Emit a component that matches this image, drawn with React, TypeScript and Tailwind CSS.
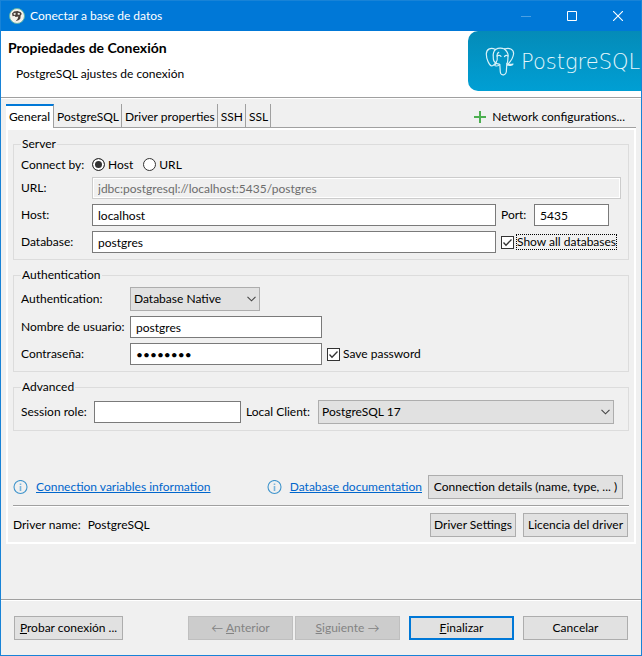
import { ReactNode } from 'react';

const FIELD = 'h-[22px] border border-[#7a7a7a] bg-white px-[5px] text-[12px] leading-[18px] text-black outline-none min-w-0';
const BUTTON = 'h-6 border border-[#adadad] bg-[#e1e1e1] text-center whitespace-nowrap';
const GREY_BUTTON = 'h-6 border border-[#bfbfbf] bg-[#cccccc] text-center whitespace-nowrap text-[#838383]';

const TABS = ['PostgreSQL', 'Driver properties', 'SSH', 'SSL'];

function AppIcon() {
  return (
    <svg className="size-4" viewBox="0 0 16 16" aria-hidden="true">
      <circle cx="8" cy="8" r="7.5" fill="#f4f1ea" stroke="#5fb3ac" />
      <path d="M3 5.4 L5 3.4 L8.6 3 L11.8 4.2 L12.8 6 L11.6 7.6 L11.4 10.4 L10 12 L6.6 13.2 L8.6 11 L9.4 8.6 L6.6 9 L5.6 7.8 L3.6 8.2 Z" fill="#4a3f3a" />
      <path d="M4.4 5.6 L6.4 4.8 L6.8 6.4 L5 7 Z M8.8 4.8 L11 5.2 L10.4 7 L8.6 6.6 Z" fill="#f4f1ea" />
    </svg>
  );
}

function Elephant() {
  return (
    <svg className="h-[31px] w-[30px] shrink-0" viewBox="0 0 30 31" fill="none" stroke="#d8f1f8" strokeWidth="1.2" strokeLinecap="round" strokeLinejoin="round" aria-hidden="true">
      {/* left ear */}
      <path d="M10.500 3.500 C6 1.200 1.500 2.500 1.300 8 C1.300 12.500 4 19.500 6.800 20 C8.300 20 9.500 18.300 10.800 16.800" />
      <path d="M10.500 3.500 C8.300 5.500 8 8.500 8.300 11 C8.100 13.800 8.800 15.800 10.800 16.800 C12.300 15 12.600 13 12.200 11 C11.800 8.500 12.500 7 13.800 6.300" />
      {/* head and right ear */}
      <path d="M10.500 3.500 C13 2 17 2 19.500 3 C24 1.200 28.800 3 28.600 7.800 C28.200 11.500 25.500 15.500 23.300 17.800" />
      <path d="M19.500 3 C22 5.500 23.800 8.500 23 11 C22.600 13.500 23.400 15 21.800 17.800" />
      {/* trunk */}
      <path d="M12 10 C13.500 8.800 15.500 9.300 16 10.500 M19.500 10.500 C20.500 9.300 22 9.200 23 10" />
      <path d="M10.800 16.800 C12 18.500 13.500 17.500 14.700 18.500 C15.300 21 14.800 25 15.700 27.500 C17 29.800 20.800 29.300 21.300 26 L21.800 18.300 C24 20 27.300 19.500 28 18 C26 18.500 23.500 18.300 21.800 17.800" />
      <path d="M10.800 17.500 C9.800 19.300 8.800 20 11.500 20 C13.300 20 14.200 19.500 14.700 18.500" />
    </svg>
  );
}

function InfoIcon() {
  return (
    <svg className="size-[15px] shrink-0" viewBox="0 0 15 15" fill="none" stroke="#3f94cc" aria-hidden="true">
      <circle cx="7.500" cy="7" r="6.500" strokeWidth="1.100" />
      <path d="M7.500 6 V11 M7.500 3.500 V5" strokeWidth="1.600" stroke="#7ab5dc" />
    </svg>
  );
}

function Group({ title, children }: { title: string; children: ReactNode }) {
  return (
    <fieldset className="min-w-0 border border-[#dcdcdc] px-[7px] pb-[6px]">
      <legend className="px-[1px] leading-4">{title}</legend>
      {children}
    </fieldset>
  );
}

function CheckBox({ id, label, focused }: { id: string; label: string; focused?: boolean }) {
  return (
    <span className="flex items-center gap-[2px]">
      <span className="grid shrink-0">
        <input id={id} type="checkbox" defaultChecked className="peer col-start-1 row-start-1 size-[13px] appearance-none border border-[#333] bg-white" />
        <svg className="pointer-events-none invisible col-start-1 row-start-1 size-[13px] peer-checked:visible" viewBox="0 0 13 13" fill="none" stroke="#333" strokeWidth="1.300" aria-hidden="true">
          <path d="M2.500 6.500 L5 9.200 L10.500 3.500" />
        </svg>
      </span>
      <label htmlFor={id} className={focused ? 'border border-dotted border-black leading-[14px] whitespace-nowrap' : 'border border-transparent leading-[14px] whitespace-nowrap'}>
        {label}
      </label>
    </span>
  );
}

function Radio({ label, checked }: { label: string; checked?: boolean }) {
  return (
    <label className="flex items-center gap-[3px]">
      <input
        type="radio"
        name="connect-by"
        defaultChecked={checked}
        className="size-[13px] appearance-none rounded-full border border-[#333] bg-white checked:bg-[#333] checked:shadow-[inset_0_0_0_2px_white]"
      />
      {label}
    </label>
  );
}

function DropDown({ id, value, className }: { id: string; value: string; className: string }) {
  return (
    <div className={`grid items-center ${className}`}>
      <select id={id} className="col-start-1 row-start-1 h-6 w-full appearance-none border border-[#adadad] bg-[#e1e1e1] pl-[3px] text-[12px] outline-none">
        <option>{value}</option>
      </select>
      <svg className="pointer-events-none col-start-1 row-start-1 mr-1 h-[6px] w-[9px] justify-self-end" viewBox="0 0 9 6" fill="none" stroke="#444" strokeWidth="1.100" aria-hidden="true">
        <path d="M.5 .8 L4.500 4.800 L8.500 .8" />
      </svg>
    </div>
  );
}

function TitleBar() {
  return (
    <div className="flex h-[30px] items-center bg-[#0078d7] pl-2 text-white">
      <AppIcon />
      <h1 className="ml-[5px] flex-1">Conectar a base de datos</h1>
      <button type="button" disabled aria-label="Minimizar" className="grid h-full w-[46px] place-items-center">
        <svg className="size-[10px]" viewBox="0 0 10 10" stroke="#4ba0e3" aria-hidden="true"><path d="M0 5.500 H10" /></svg>
      </button>
      <button type="button" aria-label="Maximizar" className="grid h-full w-[46px] place-items-center">
        <svg className="size-[10px]" viewBox="0 0 10 10" fill="none" stroke="#fff" aria-hidden="true"><path d="M.5 .5 H9.500 V9.500 H.5 Z" /></svg>
      </button>
      <button type="button" aria-label="Cerrar" className="grid h-full w-[46px] place-items-center">
        <svg className="size-[10px]" viewBox="0 0 10 10" stroke="#fff" strokeWidth="1.100" aria-hidden="true"><path d="M0 0 L10 10 M10 0 L0 10" /></svg>
      </button>
    </div>
  );
}

function Banner() {
  return (
    <header className="flex h-[66px] bg-white">
      <div className="flex-1 pt-2 pl-[7px]">
        <h2 className="text-[14px] leading-[18px] font-bold">Propiedades de Conexión</h2>
        <p className="mt-[9px] pl-2 leading-4">PostgreSQL ajustes de conexión</p>
      </div>
      <div className="flex h-[60px] w-[173px] items-center gap-[6px] overflow-hidden rounded-l-[10px] bg-linear-to-b from-[#048bb8] to-[#009fd4] pl-[17px] text-[#e6f7fc]">
        <Elephant />
        <span className="pt-[2px] font-['DejaVu_Sans',sans-serif] text-[21px] leading-6 font-extralight">PostgreSQL</span>
      </div>
    </header>
  );
}

function TabBar() {
  return (
    <div className="flex h-6 items-stretch" role="tablist">
      <button type="button" role="tab" aria-selected="true" className="w-[48px] border-t-2 border-r border-t-[#0078d7] border-r-[#a0a0a0] bg-white text-center">
        General
      </button>
      <div className="flex flex-1 items-stretch border-b border-[#a0a0a0]">
        {TABS.map(tab => (
          <button key={tab} type="button" role="tab" aria-selected="false" className="border-r border-[#a0a0a0] pt-[2px] pr-[2px] pl-[3px] whitespace-nowrap">
            {tab}
          </button>
        ))}
        <button type="button" className="mr-[11px] ml-auto flex items-center gap-[6px] pt-[2px]">
          <svg className="size-3" viewBox="0 0 12 12" stroke="#4caf50" strokeWidth="2" aria-hidden="true"><path d="M6 0 V12 M0 6 H12" /></svg>
          Network configurations...
        </button>
      </div>
    </div>
  );
}

function ServerGroup() {
  return (
    <Group title="Server">
      <div className="flex h-[25px] items-center" role="radiogroup" aria-labelledby="connect-by">
        <span id="connect-by" className="w-[71px]">Connect by:</span>
        <div className="flex gap-[10px]">
          <Radio label="Host" checked />
          <Radio label="URL" />
        </div>
      </div>
      <div className="grid grid-cols-[71px_1fr_38px_75px_12px] items-center gap-y-[5px]">
        <label htmlFor="url">URL:</label>
        <input id="url" readOnly value="jdbc:postgresql://localhost:5435/postgres" className="col-span-4 h-[22px] border border-[#cccccc] bg-[#f0f0f0] px-[5px] text-[12px] text-[#6d6d6d] shadow-[inset_0_0_0_1px_white] outline-none" />

        <label htmlFor="host">Host:</label>
        <input id="host" defaultValue="localhost" className={FIELD} />
        <label htmlFor="port" className="pl-[5px]">Port:</label>
        <input id="port" defaultValue="5435" className={FIELD} />
        <span />

        <label htmlFor="database">Database:</label>
        <input id="database" defaultValue="postgres" className={FIELD} />
        <div className="col-span-3 pl-[5px]">
          <CheckBox id="show-all" label="Show all databases" focused />
        </div>
      </div>
    </Group>
  );
}

function AuthGroup() {
  return (
    <Group title="Authentication">
      <div className="grid grid-cols-[109px_192px_1fr] items-center gap-y-[5px] pt-1">
        <label htmlFor="auth">Authentication:</label>
        <DropDown id="auth" value="Database Native" className="w-[130px]" />
        <span />

        <label htmlFor="user" className="whitespace-nowrap">Nombre de usuario:</label>
        <input id="user" defaultValue="postgres" className={FIELD} />
        <span />

        <label htmlFor="password">Contraseña:</label>
        <input id="password" type="password" defaultValue="postgres" className={FIELD} />
        <div className="pl-[5px]">
          <CheckBox id="save-password" label="Save password" />
        </div>
      </div>
    </Group>
  );
}

function AdvancedGroup() {
  return (
    <Group title="Advanced">
      <div className="flex items-center pt-[5px] pr-[7px]">
        <label htmlFor="role" className="w-[73px]">Session role:</label>
        <input id="role" className={`w-[147px] ${FIELD}`} />
        <label htmlFor="client" className="w-[77px] pl-[5px] whitespace-nowrap">Local Client:</label>
        <DropDown id="client" value="PostgreSQL 17" className="flex-1" />
      </div>
    </Group>
  );
}

export default function App() {
  return (
    <div className="flex min-h-screen flex-col border border-[#1883d7] bg-[#f0f0f0] font-['Lato','Open_Sans',sans-serif] text-[12px] leading-4 text-black">
      <TitleBar />
      <Banner />

      <main className="border-t border-[#a0a0a0] px-[5px] pt-[6px] shadow-[inset_0_1px_0_white]">
        <TabBar />
        <div className="border-2 border-white px-[5px] pt-[6px] pb-[5px]">
          <div className="flex flex-col gap-[7px]">
            <ServerGroup />
            <AuthGroup />
            <AdvancedGroup />
          </div>

          <div className="mt-11 flex items-center justify-between pr-[6px] pb-[6px]">
            <div className="flex items-center gap-2">
              <InfoIcon />
              <a href="#variables" className="text-[#0066cc] underline">Connection variables information</a>
            </div>
            <div className="flex items-center">
              <InfoIcon />
              <a href="#docs" className="mr-[6px] ml-2 text-[#0066cc] underline">Database documentation</a>
              <button type="button" className={`w-[195px] ${BUTTON}`}>Connection details (name, type, ... )</button>
            </div>
          </div>

          <div className="flex items-center gap-[7px] border-t border-[#a0a0a0] pt-[7px] pr-[1px] shadow-[inset_0_1px_0_white]">
            <span>Driver name:</span>
            <span className="flex-1">PostgreSQL</span>
            <button type="button" className={`w-[86px] ${BUTTON}`}>Driver Settings</button>
            <button type="button" className={`w-[105px] ${BUTTON}`}>Licencia del driver</button>
          </div>
        </div>
      </main>

      <footer className="mt-auto flex items-center border-t border-[#a0a0a0] pt-4 pr-[13px] pb-[15px] pl-[13px] shadow-[inset_0_1px_0_white]">
        <button type="button" className={`w-[109px] ${BUTTON}`}><u>P</u>robar conexión ...</button>
        <button type="button" disabled className={`ml-auto w-[105px] ${GREY_BUTTON}`}>← <u>A</u>nterior</button>
        <button type="button" disabled className={`ml-[2px] w-[105px] ${GREY_BUTTON}`}><u>S</u>iguiente →</button>
        <button type="button" className="ml-[9px] h-6 w-[105px] border-2 border-[#0078d7] bg-[#e1e1e1] text-center"><u>F</u>inalizar</button>
        <button type="button" className={`ml-[9px] w-[105px] ${BUTTON}`}>Cancelar</button>
      </footer>
    </div>
  );
}
